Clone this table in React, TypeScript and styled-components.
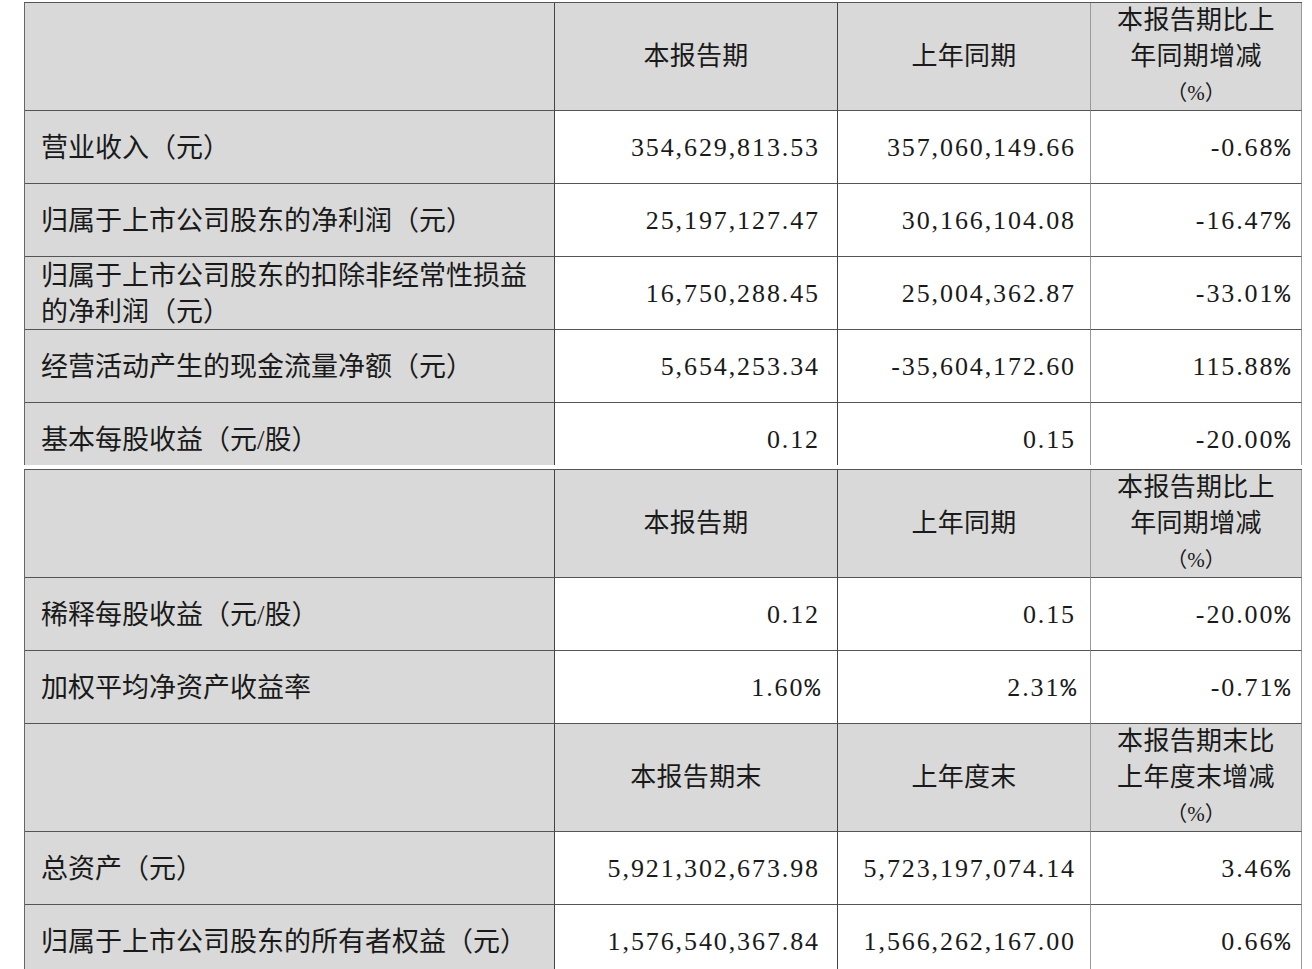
import React from 'react';
import styled, { createGlobalStyle } from 'styled-components';

const GlobalStyle = createGlobalStyle`
    html, body {
        margin: 0;
        padding: 0;
        background: #ffffff;
    }
    body {
        font-family: "Liberation Serif", "Noto Sans CJK SC", serif;
        color: #1a1a1a;
    }
`

const Page = styled.div`
    padding: 2px 10px 0 24px;
    width: 1278px;
`

const Clip = styled.div<{ $height?: number }>`
    height: ${({ $height }) => ($height ? `${$height}px` : 'auto')};
    overflow: hidden;
    margin-bottom: 4px;
`

const Table = styled.div`
    border-top: 1px solid #555;
    border-left: 1px solid #666;
`

const Row = styled.div<{ $height: number }>`
    display: grid;
    grid-template-columns: 530px 283px 253px 211px;
    height: ${({ $height }) => $height}px;
`

const Cell = styled.div<{ $head?: boolean; $label?: boolean; $light?: boolean; $padRight?: number }>`
    background: ${({ $head, $label }) => ($head || $label ? '#d9d9d9' : '#ffffff')};
    border-bottom: 1px solid #555;
    border-right: 1px solid ${({ $light }) => ($light ? '#999' : '#444')};
    display: flex;
    flex-direction: column;
    justify-content: center;
    align-items: ${({ $head, $label }) => ($head ? 'center' : $label ? 'flex-start' : 'flex-end')};
    text-align: ${({ $head }) => ($head ? 'center' : 'left')};
    padding: ${({ $head, $padRight }) => ($head ? '0 8px' : `0 ${$padRight ?? 16}px 0 16px`)};
    font-size: 26px;
    line-height: 34px;
    box-sizing: border-box;
    overflow: hidden;
`

const Label = styled.span`
    font-size: 27px;
    white-space: nowrap;
    padding-top: 2px;
`

const HeadLine = styled.span<{ $small?: boolean }>`
    display: block;
    line-height: 36px;
    font-size: ${({ $small }) => ($small ? '21px' : '26px')};
    letter-spacing: ${({ $small }) => ($small ? '0' : '0.3px')};
`

const Num = styled.span`
    letter-spacing: 1.9px;
    white-space: nowrap;
    padding-top: 2px;
`

const Percent = styled.span`
    font-family: "Liberation Mono", monospace;
    letter-spacing: 0;
`

type DataRow = { label: string[]; values: [string, string, string] };

type Section = {
    head: [string[], string[], string[]];
    rows: DataRow[];
};

const sectionOne: Section = {
    head: [['本报告期'], ['上年同期'], ['本报告期比上', '年同期增减', '（%）']],
    rows: [
        { label: ['营业收入（元）'], values: ['354,629,813.53', '357,060,149.66', '-0.68%'] },
        { label: ['归属于上市公司股东的净利润（元）'], values: ['25,197,127.47', '30,166,104.08', '-16.47%'] },
        {
            label: ['归属于上市公司股东的扣除非经常性损益', '的净利润（元）'],
            values: ['16,750,288.45', '25,004,362.87', '-33.01%'],
        },
        { label: ['经营活动产生的现金流量净额（元）'], values: ['5,654,253.34', '-35,604,172.60', '115.88%'] },
        { label: ['基本每股收益（元/股）'], values: ['0.12', '0.15', '-20.00%'] },
    ],
}

const sectionTwo: Section = {
    head: [['本报告期'], ['上年同期'], ['本报告期比上', '年同期增减', '（%）']],
    rows: [
        { label: ['稀释每股收益（元/股）'], values: ['0.12', '0.15', '-20.00%'] },
        { label: ['加权平均净资产收益率'], values: ['1.60%', '2.31%', '-0.71%'] },
    ],
}

const sectionThree: Section = {
    head: [['本报告期末'], ['上年度末'], ['本报告期末比', '上年度末增减', '（%）']],
    rows: [
        { label: ['总资产（元）'], values: ['5,921,302,673.98', '5,723,197,074.14', '3.46%'] },
        { label: ['归属于上市公司股东的所有者权益（元）'], values: ['1,576,540,367.84', '1,566,262,167.00', '0.66%'] },
    ],
}

const rightPads = [17, 14, 11];

const Value = ({ text }: { text: string }) => {
    const isPercent = text.endsWith('%');
    const body = isPercent ? text.slice(0, -1) : text;
    return (
        <Num>
            {body}
            {isPercent && <Percent>%</Percent>}
        </Num>
    );
};

const HeadRow = ({ head }: { head: Section['head'] }) => (
    <Row $height={108}>
        <Cell $head />
        {head.map((lines, i) => (
            <Cell $head key={i} $light={i >= 1}>
                {lines.map((line) => (
                    <HeadLine key={line} $small={line === '（%）'}>{line}</HeadLine>
                ))}
            </Cell>
        ))}
    </Row>
)

const BodyRow = ({ row }: { row: DataRow }) => (
    <Row $height={73}>
        <Cell $label>
            {row.label.map((line) => (
                <Label key={line}>{line}</Label>
            ))}
        </Cell>
        {row.values.map((v, i) => (
            <Cell key={i} $light={i >= 1} $padRight={rightPads[i]}>
                <Value text={v} />
            </Cell>
        ))}
    </Row>
)

const Block = ({ section }: { section: Section }) => (
    <>
        <HeadRow head={section.head} />
        {section.rows.map((row) => (
            <BodyRow key={row.label.join('')} row={row} />
        ))}
    </>
)

const App = () => {
    return (
        <Page>
            <GlobalStyle />
            <Clip $height={463}>
                <Table>
                    <Block section={sectionOne} />
                </Table>
            </Clip>
            <Table>
                <Block section={sectionTwo} />
                <Block section={sectionThree} />
            </Table>
        </Page>
    );
};

export default App;
